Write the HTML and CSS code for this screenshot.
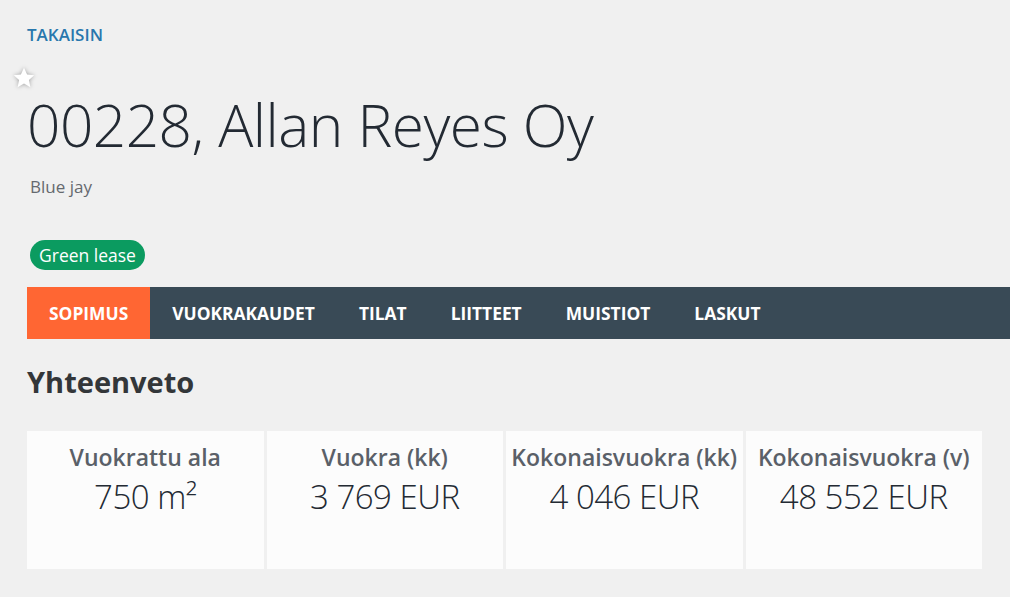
FILE: index.html
```html
<!DOCTYPE html>
<html lang="fi">
<head>
    <meta charset="UTF-8">
    <meta name="viewport" content="width=device-width, initial-scale=1.0">
    <title>Sopimus</title>
    <link rel="stylesheet" href="styles.css">
</head>
<body>
    <div class="page">
        <a class="back" href="#">TAKAISIN</a>

        <div class="heading">
            <svg class="star" width="24" height="24" viewBox="0 0 24 24">
                <path d="M12 1.8l3.1 6.6 7.1.8-5.3 4.9 1.5 7.1L12 17.6l-6.4 3.6 1.5-7.1-5.3-4.9 7.1-.8z" fill="#fff"/>
            </svg>
            <h1>00228, Allan Reyes Oy</h1>
        </div>
        <div class="subtitle">Blue jay</div>

        <div class="tags">
            <span class="tag">Green lease</span>
        </div>

        <nav class="tabs">
            <a class="tab active" href="#">SOPIMUS</a>
            <a class="tab" href="#">VUOKRAKAUDET</a>
            <a class="tab" href="#">TILAT</a>
            <a class="tab" href="#">LIITTEET</a>
            <a class="tab" href="#">MUISTIOT</a>
            <a class="tab" href="#">LASKUT</a>
        </nav>

        <h2>Yhteenveto</h2>

        <div class="summary">
            <div class="card">
                <div class="label">Vuokrattu ala</div>
                <div class="value">750 m²</div>
            </div>
            <div class="card">
                <div class="label">Vuokra (kk)</div>
                <div class="value">3 769 EUR</div>
            </div>
            <div class="card">
                <div class="label">Kokonaisvuokra (kk)</div>
                <div class="value">4 046 EUR</div>
            </div>
            <div class="card">
                <div class="label">Kokonaisvuokra (v)</div>
                <div class="value">48 552 EUR</div>
            </div>
        </div>
    </div>
</body>
</html>
```

FILE: styles.css
```css
* {
    font-family: 'Open Sans', 'Noto Sans', sans-serif;
    box-sizing: border-box;
}

body {
    margin: 0;
    background: #f0f0f0;
    overflow: hidden;
}

.page {
    padding: 24px 0 0 27px;
}

.back {
    display: inline-block;
    color: #2877ad;
    font-size: 17px;
    font-weight: 600;
    text-decoration: none;
    line-height: 22px;
}

.heading {
    position: relative;
    margin-top: 19px;
}

.star {
    position: absolute;
    left: -15px;
    top: 1px;
    filter: drop-shadow(0 0 2px rgba(0, 0, 0, 0.35));
}

h1 {
    margin: 0;
    padding-top: 20px;
    font-size: 58.5px;
    font-weight: 300;
    color: #232a33;
    line-height: 78px;
    letter-spacing: -0.5px;
}

.subtitle {
    margin-top: 13px;
    padding-left: 3px;
    font-size: 17px;
    color: #65696e;
    line-height: 22px;
}

.tags {
    display: flex;
    margin-top: 42px;
    padding-left: 3px;
}

.tag {
    background: #0b9b60;
    color: #fff;
    font-size: 17.5px;
    line-height: 30px;
    height: 30px;
    padding: 0 9px;
    border-radius: 15px;
}

.tabs {
    display: flex;
    margin-top: 17px;
    height: 52px;
    background: #394a56;
}

.tab {
    display: flex;
    align-items: center;
    padding: 0 22px;
    color: #fff;
    font-size: 17.4px;
    font-weight: 700;
    text-decoration: none;
}

.tab.active {
    background: #ff6633;
}

h2 {
    margin: 23px 0 0;
    font-size: 29px;
    font-weight: 700;
    color: #333639;
    line-height: 40px;
}

.summary {
    display: grid;
    grid-template-columns: repeat(4, 1fr);
    gap: 3px;
    width: 955px;
    margin-top: 29px;
}

.card {
    background: #fcfcfc;
    height: 138px;
    text-align: center;
    padding-top: 10px;
}

.label {
    font-size: 23px;
    font-weight: 600;
    color: #5a6068;
    line-height: 32px;
}

.value {
    margin-top: 3px;
    font-size: 33px;
    font-weight: 300;
    color: #232a33;
    line-height: 42px;
    letter-spacing: -0.5px;
}
```
